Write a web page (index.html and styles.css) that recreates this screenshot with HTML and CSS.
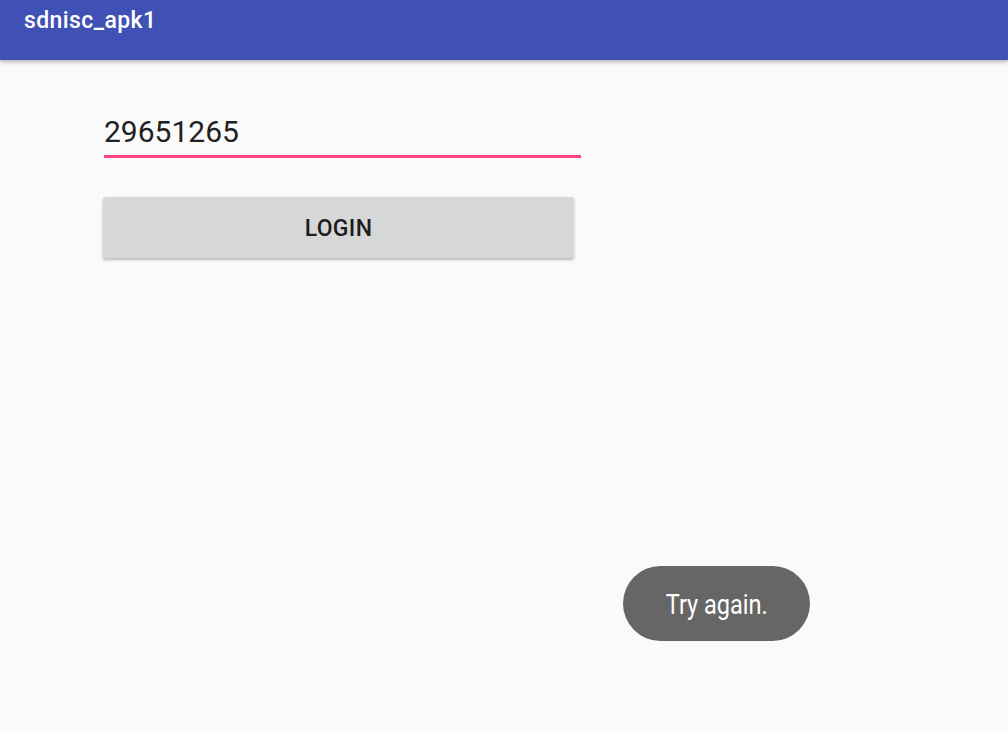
FILE: index.html
```html
<!DOCTYPE html>
<html>
<head>
<meta charset="utf-8">
<link rel="stylesheet" href="styles.css">
</head>
<body>
<div class="app">
  <header class="toolbar"><span class="title">sdnisc_apk1</span></header>
  <main class="content">
    <div class="field"><span class="value">29651265</span></div>
    <button class="login">LOGIN</button>
  </main>
  <div class="toast"><span class="toast-text">Try again.</span></div>
</div>
</body>
</html>
```
FILE: styles.css
```css
html, body {
  margin: 0;
  padding: 0;
  background: #fafafa;
  font-family: Roboto, "Liberation Sans", sans-serif;
}
.app {
  position: relative;
  width: 1008px;
  height: 732px;
  overflow: hidden;
  background: #fafafa;
}
.toolbar {
  height: 60px;
  background: #3f51b5;
  box-shadow: 0 2px 4px rgba(0,0,0,0.28);
  display: flex;
  align-items: flex-start;
  padding-left: 24px;
  position: relative;
  z-index: 1;
}
.title {
  color: #fff;
  font-size: 23px;
  font-weight: 500;
  letter-spacing: 0.4px;
  line-height: 26px;
  margin-top: 8px;
}
.content {
  padding: 0 0 0 103px;
  display: flex;
  flex-direction: column;
  align-items: flex-start;
}
.field {
  width: 477px;
  margin-top: 54px;
  margin-left: 1px;
  border-bottom: 3px solid #ff4081;
  height: 41px;
  box-sizing: content-box;
}
.value {
  display: block;
  font-size: 30px;
  color: #212121;
  line-height: 34px;
  padding-top: 1px;
}
.login {
  margin-top: 39px;
  width: 471px;
  height: 61px;
  border: none;
  border-radius: 2px;
  background: #d6d7d7;
  box-shadow: 0 2px 3px rgba(0,0,0,0.25);
  font-family: Roboto, "Liberation Sans", sans-serif;
  font-weight: 500;
  font-size: 23px;
  color: #1e1e1e;
  letter-spacing: 0.3px;
  padding: 0;
  padding-top: 2px;
}
.toast {
  position: absolute;
  left: 623px;
  top: 566px;
  width: 187px;
  height: 75px;
  border-radius: 38px;
  background: #666666;
  display: flex;
  align-items: center;
  justify-content: center;
}
.toast-text {
  color: #fff;
  font-size: 28px;
  display: inline-block;
  transform: scaleX(0.84);
  margin-top: 2px;
}
```
